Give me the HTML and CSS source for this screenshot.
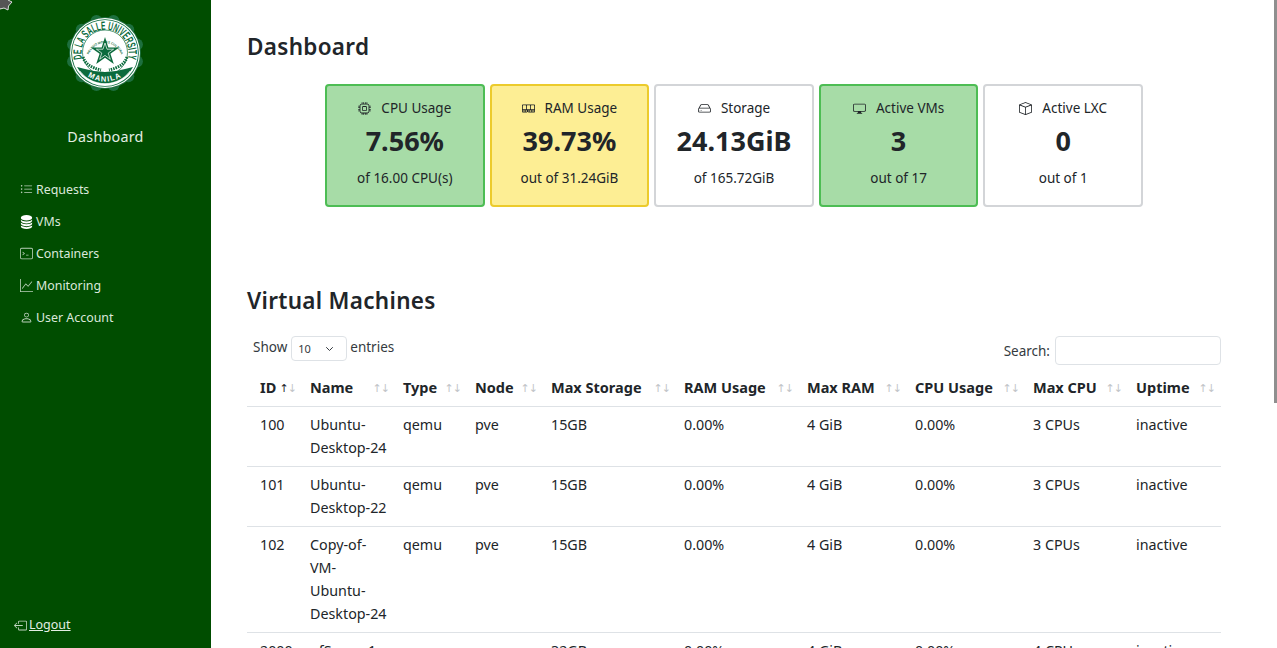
FILE: index.html
```html
<!DOCTYPE html>
<html lang="en">
<head>
<meta charset="utf-8">
<title>Dashboard</title>
<link rel="stylesheet" href="styles.css">
</head>
<body>
<svg class="pointer" width="13" height="11" viewBox="0 0 13 11"><path d="M-2 -2H8L8 0L12 2L8.500 6L8 10L4 8L0 9L-2 4Z" fill="#555" stroke="#ddd" stroke-width="1"/></svg>
<aside class="sidebar">
  <svg class="logo" width="80" height="80" viewBox="0 0 80 80">
    <defs>
      <path id="arcTop" d="M17.200 45.900A23.500 23.500 0 1 1 62.800 45.900"/>
      <path id="arcBottom" d="M18 60Q40 77 62 60"/>
      <path id="arcMotto" d="M23.500 43A17 17 0 0 1 56.500 43"/>
    </defs>
    <g class="scallops">
      <circle cx="71.900" cy="31.500" r="6"/><circle cx="71.900" cy="48.500" r="6"/>
      <circle cx="8.100" cy="31.500" r="6"/><circle cx="8.100" cy="48.500" r="6"/>
      <circle cx="63.300" cy="16.700" r="6"/><circle cx="63.300" cy="63.300" r="6"/>
      <circle cx="16.700" cy="16.700" r="6"/><circle cx="16.700" cy="63.300" r="6"/>
      <circle cx="48.500" cy="8.100" r="6"/><circle cx="48.500" cy="71.900" r="6"/>
      <circle cx="31.500" cy="8.100" r="6"/><circle cx="31.500" cy="71.900" r="6"/>
      <circle cx="40" cy="40" r="36"/>
    </g>
    <circle cx="40" cy="40" r="35" fill="#fff"/>
    <circle cx="40" cy="40" r="33.800" fill="#0b6b3d"/>
    <circle cx="40" cy="40" r="33" fill="#fff"/>
    <path d="M12 54L20 56Q40 62 60 56L68 54A32 32 0 0 1 12 54Z" fill="#0b6b3d"/>
    <path d="M15 58A31 31 0 0 0 65 58" fill="none" stroke="#fff" stroke-width=".6"/>
    <text class="seal-top"><textPath href="#arcTop" textLength="85" lengthAdjust="spacingAndGlyphs">DE LA SALLE UNIVERSITY</textPath></text>
    <text class="seal-bottom"><textPath href="#arcBottom" startOffset="50%" text-anchor="middle">MANILA</textPath></text>
    <circle cx="40" cy="39.500" r="22.500" fill="none" stroke="#0b6b3d" stroke-width=".7"/>
    <text class="seal-motto"><textPath href="#arcMotto" startOffset="50%" text-anchor="middle">RELIGIO MORES CULTURA</textPath></text>
    <path d="M40 24L43.350 34.400L54.300 34.400L45.420 40.760L48.800 51.100L40 44.700L31.200 51.100L34.580 40.760L25.700 34.400L36.650 34.400Z" fill="#0b6b3d"/>
    <path d="M40 30L42 36.200L48.600 36.200L43.200 40.050L45.300 46.300L40 42.400L34.700 46.300L36.800 40.050L31.400 36.200L38 36.200Z" fill="none" stroke="#fff" stroke-width=".7"/>
    <path d="M18 44C20 51 27 55 36 57M62 44C60 51 53 55 44 57" fill="none" stroke="#0b6b3d" stroke-width="3" stroke-dasharray="1.500 1"/>
  </svg>
  <div class="side-title">Dashboard</div>
  <nav class="side-nav">
    <a class="side-link"><svg class="bi" viewBox="0 0 16 16" fill="currentColor"><path fill-rule="evenodd" d="M5 11.500a.5.500 0 0 1 .5-.5h9a.5.500 0 0 1 0 1h-9a.5.500 0 0 1-.5-.5m0-4a.5.500 0 0 1 .5-.5h9a.5.500 0 0 1 0 1h-9a.5.500 0 0 1-.5-.5m0-4a.5.500 0 0 1 .5-.5h9a.5.500 0 0 1 0 1h-9a.5.500 0 0 1-.5-.5m-3 1a1 1 0 1 0 0-2 1 1 0 0 0 0 2m0 4a1 1 0 1 0 0-2 1 1 0 0 0 0 2m0 4a1 1 0 1 0 0-2 1 1 0 0 0 0 2"/></svg>Requests</a>
    <a class="side-link"><svg class="bi bi-strong" viewBox="0 0 16 16" fill="currentColor"><path d="M3.904 1.777C4.978 1.289 6.427 1 8 1s3.022.289 4.096.777C13.125 2.245 14 2.993 14 4s-.875 1.755-1.904 2.223C11.022 6.711 9.573 7 8 7s-3.022-.289-4.096-.777C2.875 5.755 2 5.007 2 4s.875-1.755 1.904-2.223"/><path d="M2 6.161V7c0 1.007.875 1.755 1.904 2.223C4.978 9.711 6.427 10 8 10s3.022-.289 4.096-.777C13.125 8.755 14 8.007 14 7v-.839c-.457.432-1.004.751-1.490.972C11.278 7.693 9.682 8 8 8s-3.278-.307-4.510-.867c-.486-.22-1.033-.54-1.490-.972"/><path d="M2 9.161V10c0 1.007.875 1.755 1.904 2.223C4.978 12.711 6.427 13 8 13s3.022-.289 4.096-.777C13.125 11.755 14 11.007 14 10v-.839c-.457.432-1.004.751-1.490.972-1.232.56-2.828.867-4.510.867s-3.278-.307-4.510-.867c-.486-.22-1.033-.54-1.490-.972"/><path d="M2 12.161V13c0 1.007.875 1.755 1.904 2.223C4.978 15.711 6.427 16 8 16s3.022-.289 4.096-.777C13.125 14.755 14 14.007 14 13v-.839c-.457.432-1.004.751-1.490.972-1.232.56-2.828.867-4.510.867s-3.278-.307-4.510-.867c-.486-.22-1.033-.54-1.490-.972"/></svg>VMs</a>
    <a class="side-link"><svg class="bi" viewBox="0 0 16 16" fill="currentColor"><path d="M0 3a2 2 0 0 1 2-2h12a2 2 0 0 1 2 2v10a2 2 0 0 1-2 2H2a2 2 0 0 1-2-2zm2-1a1 1 0 0 0-1 1v10a1 1 0 0 0 1 1h12a1 1 0 0 0 1-1V3a1 1 0 0 0-1-1z"/><path d="M6 8a.5.500 0 0 1-.2.400l-2 1.500a.5.500 0 0 1-.6-.8L4.670 8 3.200 6.900a.5.500 0 1 1 .6-.8l2 1.500A.5.500 0 0 1 6 8m1.500 1.500h3v1h-3z"/></svg>Containers</a>
    <a class="side-link"><svg class="bi" viewBox="0 0 16 16" fill="currentColor"><path fill-rule="evenodd" d="M0 0h1v15h15v1H0zm14.817 3.113a.5.500 0 0 1 .07.704l-4.500 5.500a.5.500 0 0 1-.74.037L7.060 6.767l-3.656 5.027a.5.500 0 0 1-.808-.588l4-5.500a.5.500 0 0 1 .758-.060l2.609 2.610 4.150-5.073a.5.500 0 0 1 .704-.070"/></svg>Monitoring</a>
    <a class="side-link"><svg class="bi" viewBox="0 0 16 16" fill="currentColor"><path d="M8 8a3 3 0 1 0 0-6 3 3 0 0 0 0 6m2-3a2 2 0 1 1-4 0 2 2 0 0 1 4 0m4 8c0 1-1 1-1 1H3s-1 0-1-1 1-4 6-4 6 3 6 4m-1-.004c-.001-.246-.154-.986-.832-1.664C11.516 10.680 10.289 10 8 10s-3.516.680-4.168 1.332c-.678.678-.83 1.418-.832 1.664z"/></svg>User Account</a>
  </nav>
  <a class="logout"><svg class="bi" viewBox="0 0 16 16" fill="currentColor"><path d="M6 12.500a.5.500 0 0 0 .5.500h8a.5.500 0 0 0 .5-.5v-9a.5.500 0 0 0-.5-.5h-8a.5.500 0 0 0-.5.500v2a.5.500 0 0 1-1 0v-2A1.500 1.500 0 0 1 6.500 2h8A1.500 1.500 0 0 1 16 3.500v9a1.500 1.500 0 0 1-1.500 1.500h-8A1.500 1.500 0 0 1 5 12.500v-2a.5.500 0 0 1 1 0z"/><path d="M.146 8.354a.5.500 0 0 1 0-.708l3-3a.5.500 0 1 1 .708.708L1.707 7.500H10.500a.5.500 0 0 1 0 1H1.707l2.147 2.146a.5.500 0 0 1-.708.708z"/></svg><span class="logout-text">Logout</span></a>
</aside>
<main class="main">
  <h1 class="heading">Dashboard</h1>
  <section class="cards">
    <div class="card card-green">
      <div class="card-title"><svg class="card-icon" viewBox="0 0 16 16" fill="currentColor"><path d="M5 0a.5.500 0 0 1 .5.500V2h1V.5a.5.500 0 0 1 1 0V2h1V.5a.5.500 0 0 1 1 0V2h1V.5a.5.500 0 0 1 1 0V2A2.500 2.500 0 0 1 14 4.500h1.500a.5.500 0 0 1 0 1H14v1h1.500a.5.500 0 0 1 0 1H14v1h1.500a.5.500 0 0 1 0 1H14v1h1.500a.5.500 0 0 1 0 1H14a2.500 2.500 0 0 1-2.500 2.500v1.500a.5.500 0 0 1-1 0V14h-1v1.500a.5.500 0 0 1-1 0V14h-1v1.500a.5.500 0 0 1-1 0V14h-1v1.500a.5.500 0 0 1-1 0V14A2.500 2.500 0 0 1 2 11.500H.5a.5.500 0 0 1 0-1H2v-1H.5a.5.500 0 0 1 0-1H2v-1H.5a.5.500 0 0 1 0-1H2v-1H.5a.5.500 0 0 1 0-1H2A2.500 2.500 0 0 1 4.500 2V.5A.5.500 0 0 1 5 0m-.5 3A1.500 1.500 0 0 0 3 4.500v7A1.500 1.500 0 0 0 4.500 13h7a1.500 1.500 0 0 0 1.500-1.500v-7A1.500 1.500 0 0 0 11.500 3zM5 6.500A1.500 1.500 0 0 1 6.500 5h3A1.500 1.500 0 0 1 11 6.500v3A1.500 1.500 0 0 1 9.500 11h-3A1.500 1.500 0 0 1 5 9.500zM6.500 6a.5.500 0 0 0-.5.500v3a.5.500 0 0 0 .5.500h3a.5.500 0 0 0 .5-.5v-3a.5.500 0 0 0-.5-.5z"/></svg><span>CPU Usage</span></div>
      <div class="card-value">7.56%</div>
      <div class="card-sub">of 16.00 CPU(s)</div>
    </div>
    <div class="card card-yellow">
      <div class="card-title"><svg class="card-icon" viewBox="0 0 16 16" fill="currentColor"><path d="M1 3a1 1 0 0 0-1 1v8a1 1 0 0 0 1 1h4.586a1 1 0 0 0 .707-.293l.353-.353a.5.500 0 0 1 .708 0l.353.353a1 1 0 0 0 .707.293H15a1 1 0 0 0 1-1V4a1 1 0 0 0-1-1zm.5 1h3a.5.500 0 0 1 .5.500v4a.5.500 0 0 1-.5.500h-3a.5.500 0 0 1-.5-.5v-4a.5.500 0 0 1 .5-.5m5 0h3a.5.500 0 0 1 .5.500v4a.5.500 0 0 1-.5.500h-3a.5.500 0 0 1-.5-.5v-4a.5.500 0 0 1 .5-.5m4.500.500a.5.500 0 0 1 .5-.5h3a.5.500 0 0 1 .5.500v4a.5.500 0 0 1-.5.500h-3a.5.500 0 0 1-.5-.5zM2 10v2H1v-2zm2 0v2H3v-2zm2 0v2H5v-2zm3 0v2H8v-2zm2 0v2h-1v-2zm2 0v2h-1v-2zm2 0v2h-1v-2z"/></svg><span>RAM Usage</span></div>
      <div class="card-value">39.73%</div>
      <div class="card-sub">out of 31.24GiB</div>
    </div>
    <div class="card">
      <div class="card-title"><svg class="card-icon" viewBox="0 0 16 16" fill="currentColor"><path d="M4.500 11a.5.500 0 1 0 0-1 .5.500 0 0 0 0 1M3 10.500a.5.500 0 1 1-1 0 .5.500 0 0 1 1 0"/><path d="M16 11a2 2 0 0 1-2 2H2a2 2 0 0 1-2-2V9.510c0-.418.105-.83.305-1.197l2.640-4.830A1.500 1.500 0 0 1 4.260 2.700h7.480c.549 0 1.054.300 1.316.783l2.640 4.830c.200.367.305.780.305 1.197zM3.820 3.960 1.890 7.500c.04-.003.070-.500.110-.5h12c.040 0 .070.497.110.500l-1.930-3.540a.5.500 0 0 0-.44-.260H4.260a.5.500 0 0 0-.44.260M1 9v2a1 1 0 0 0 1 1h12a1 1 0 0 0 1-1V9a1 1 0 0 0-1-1H2a1 1 0 0 0-1 1"/></svg><span>Storage</span></div>
      <div class="card-value">24.13GiB</div>
      <div class="card-sub">of 165.72GiB</div>
    </div>
    <div class="card card-green">
      <div class="card-title"><svg class="card-icon" viewBox="0 0 16 16" fill="currentColor"><path d="M0 4s0-2 2-2h12s2 0 2 2v6s0 2-2 2h-4q0 1 .250 1.500H11a.5.500 0 0 1 0 1H5a.5.500 0 0 1 0-1h.750Q6 13 6 12H2s-2 0-2-2zm1.398-.855a.76.760 0 0 0-.254.302A1.500 1.500 0 0 0 1 4.010V10c0 .325.078.502.145.602q.105.156.302.254a1.500 1.500 0 0 0 .538.143L2.010 11H14c.325 0 .502-.78.602-.145a.76.760 0 0 0 .254-.302 1.500 1.500 0 0 0 .143-.538L15 9.990V4c0-.325-.078-.502-.145-.602a.76.760 0 0 0-.302-.254A1.500 1.500 0 0 0 13.990 3H2c-.325 0-.502.078-.602.145"/></svg><span>Active VMs</span></div>
      <div class="card-value">3</div>
      <div class="card-sub">out of 17</div>
    </div>
    <div class="card">
      <div class="card-title"><svg class="card-icon" viewBox="0 0 16 16" fill="currentColor"><path d="M8.186 1.113a.5.500 0 0 0-.372 0L1.846 3.500 8 5.961 14.154 3.500zM15 4.239l-6.500 2.600v7.922l6.500-2.600V4.240zM7.500 14.762V6.838L1 4.239v7.925zM7.443.184a1.500 1.500 0 0 1 1.114 0l7.129 2.852A.5.500 0 0 1 16 3.500v8.662a1 1 0 0 1-.629.928l-7.185 2.874a.5.500 0 0 1-.372 0L.63 13.090a1 1 0 0 1-.630-.928V3.500a.5.500 0 0 1 .314-.464z"/></svg><span>Active LXC</span></div>
      <div class="card-value">0</div>
      <div class="card-sub">out of 1</div>
    </div>
  </section>
  <h2 class="heading heading-vm">Virtual Machines</h2>
  <div class="controls">
    <div class="length">Show <span class="select"><span>10</span><svg width="11" height="8" viewBox="0 0 16 16" fill="none" stroke="#343a40" stroke-width="2" stroke-linecap="round" stroke-linejoin="round"><path d="M2 5l6 6 6-6"/></svg></span> entries</div>
    <div class="search">Search: <span class="search-box"></span></div>
  </div>
  <table class="table">
    <colgroup>
      <col class="c1"><col class="c2"><col class="c3"><col class="c4"><col class="c5"><col class="c6"><col class="c7"><col class="c8"><col class="c9"><col class="c10">
    </colgroup>
    <thead>
      <tr>
        <th>ID<span class="sort"><b>↑</b>↓</span></th>
        <th>Name<span class="sort">↑↓</span></th>
        <th>Type<span class="sort">↑↓</span></th>
        <th>Node<span class="sort">↑↓</span></th>
        <th>Max Storage<span class="sort">↑↓</span></th>
        <th>RAM Usage<span class="sort">↑↓</span></th>
        <th>Max RAM<span class="sort">↑↓</span></th>
        <th>CPU Usage<span class="sort">↑↓</span></th>
        <th>Max CPU<span class="sort">↑↓</span></th>
        <th>Uptime<span class="sort sort-last">↑↓</span></th>
      </tr>
    </thead>
    <tbody>
      <tr><td>100</td><td>Ubuntu-<br>Desktop-24</td><td>qemu</td><td>pve</td><td>15GB</td><td>0.00%</td><td>4 GiB</td><td>0.00%</td><td>3 CPUs</td><td>inactive</td></tr>
      <tr><td>101</td><td>Ubuntu-<br>Desktop-22</td><td>qemu</td><td>pve</td><td>15GB</td><td>0.00%</td><td>4 GiB</td><td>0.00%</td><td>3 CPUs</td><td>inactive</td></tr>
      <tr><td>102</td><td>Copy-of-<br>VM-<br>Ubuntu-<br>Desktop-24</td><td>qemu</td><td>pve</td><td>15GB</td><td>0.00%</td><td>4 GiB</td><td>0.00%</td><td>3 CPUs</td><td>inactive</td></tr>
      <tr><td>2000</td><td>pfSense-1</td><td>qemu</td><td>pve</td><td>32GB</td><td>0.00%</td><td>4 GiB</td><td>0.00%</td><td>4 CPUs</td><td>inactive</td></tr>
    </tbody>
  </table>
</main>
<div class="scroll-thumb"></div>
</body>
</html>
```
FILE: styles.css
```css
* { box-sizing: border-box; }
html, body { margin: 0; height: 100%; }
body {
  display: flex;
  height: 648px;
  overflow: hidden;
  background: #fff;
  color: #212529;
  font-family: "Noto Sans", "DejaVu Sans", sans-serif;
  font-size: 14px;
}
.pointer { position: absolute; left: 0; top: 0; z-index: 5; }
.sidebar {
  width: 211px;
  flex: none;
  height: 648px;
  background: #004d00;
  color: #e3eee3;
  display: flex;
  flex-direction: column;
  align-items: center;
  padding-top: 13px;
}
.logo { display: block; margin-left: -1px; }
.scallops { fill: #1d6f3e; }
.side-title { margin-top: 33px; font-size: 14.300px; line-height: 22px; letter-spacing: .25px; }
.side-nav { display: flex; flex-direction: column; align-self: flex-start; margin-top: 25px; padding-left: 20px; }
.side-link { display: flex; align-items: center; gap: 3px; height: 32px; font-size: 12.400px; color: #dbe8db; }
.bi { width: 13px; height: 13px; flex: none; opacity: .85; }
.bi-strong { width: 15px; height: 15px; margin: 0 -1px; opacity: 1; color: #fff; }
.logout { margin-top: auto; margin-bottom: 13px; align-self: flex-start; margin-left: 14px; display: flex; align-items: center; gap: 2px; font-size: 12.500px; color: #e3eee3; line-height: 20px; }
.logout-text { text-decoration: underline; }
.seal-top { font: 700 12px "Liberation Sans", sans-serif; fill: #0b6b3d; }
.seal-bottom { font: 700 7.500px "Liberation Sans", sans-serif; fill: #fff; letter-spacing: 1.200px; }
.seal-motto { font: 700 3.200px "Liberation Sans", sans-serif; fill: #0b6b3d; }
.main { flex: 1; min-width: 0; padding: 32px 56px 0 36px; overflow: hidden; }
.heading { margin: 0; font-size: 22.500px; font-weight: 600; line-height: 30px; letter-spacing: .3px; }
.heading-vm { margin-top: 79px; }
.cards { display: flex; justify-content: center; gap: 5px; margin-top: 22px; }
.card {
  width: 159.600px;
  height: 123px;
  border: 2px solid #d3d5d8;
  border-radius: 4px;
  background: #fff;
  display: flex;
  flex-direction: column;
  align-items: center;
}
.card-green { background: #a7dca7; border-color: #4dbd54; }
.card-yellow { background: #fdee94; border-color: #eccb2c; }
.card-title { display: flex; align-items: center; gap: 10px; margin-top: 12px; height: 20px; font-size: 13.500px; }
.card-icon { width: 13px; height: 13px; }
.card-value { margin-top: 4px; font-size: 27px; line-height: 38px; font-weight: 700; }
.card-sub { margin-top: 8px; font-size: 13.500px; line-height: 20px; }
.controls { display: flex; justify-content: space-between; margin: 20px 0 0; padding: 0 0 0 6px; height: 36px; font-size: 13.500px; color: #343a40; }
.length { display: flex; align-items: flex-start; gap: 4px; height: 24px; line-height: 22px; }
.select { display: flex; align-items: center; justify-content: space-between; width: 56px; height: 25px; margin-right: -1px; padding: 0 11px 0 6px; border: 1px solid #dee2e6; border-radius: 4px; font-size: 11px; }
.search { display: flex; align-items: center; gap: 5px; height: 29px; }
.search-box { display: block; width: 166px; height: 29px; border: 1px solid #dee2e6; border-radius: 4px; }
.table { width: 974px; border-collapse: collapse; table-layout: fixed; font-size: 14.300px; }
.table th { position: relative; height: 34px; padding: 0 13px 4px; text-align: left; font-size: 14.500px; font-weight: 700; color: #212529; border-bottom: 1px solid #dee2e6; white-space: nowrap; }
.table td { padding: 6px 0 7px 13px; line-height: 23px; vertical-align: top; border-bottom: 1px solid #dee2e6; white-space: nowrap; }
.sort { position: absolute; right: 1px; top: 9px; font-size: 11px; font-weight: 400; line-height: 14px; color: #c2c5c8; letter-spacing: -1px; }
.sort-last { right: 6px; }
.sort b { font-weight: 400; color: #212529; }
.c1 { width: 50px; } .c2 { width: 93px; } .c3 { width: 72px; } .c4 { width: 76px; } .c5 { width: 133px; }
.c6 { width: 123px; } .c7 { width: 108px; } .c8 { width: 118px; } .c9 { width: 103px; } .c10 { width: 98px; }
.scroll-thumb { position: absolute; right: 0; top: 0; width: 3px; height: 403px; background: #8f8f8f; }
```
